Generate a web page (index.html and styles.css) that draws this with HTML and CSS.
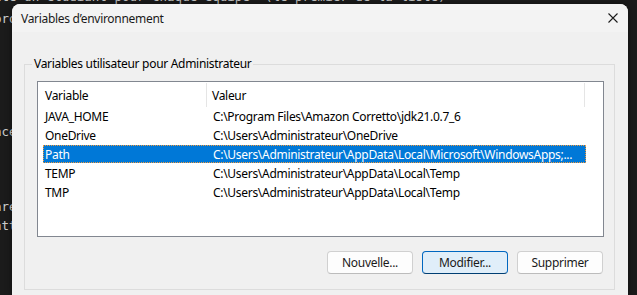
FILE: index.html
```html
<!DOCTYPE html>
<html lang="fr">
<head>
<meta charset="utf-8">
<title>Variables d’environnement</title>
<link rel="stylesheet" href="styles.css">
</head>
<body>
<div class="terminal">
  <div class="tline first">ute un étudiant pour chaque équipe  (le premier de la liste)</div>
  <div class="tline">proj</div>
  <div class="tline"></div>
  <div class="tline"></div>
  <div class="tline"></div>
  <div class="tline"></div>
  <div class="tline"></div>
  <div class="tline">ace</div>
  <div class="tline"></div>
  <div class="tline"></div>
  <div class="tline"></div>
  <div class="tline">are</div>
  <div class="tline">htt:</div>
</div>

<div class="dialog">
  <div class="titlebar">
    <span class="title">Variables d’environnement</span>
    <svg class="close" width="10" height="10" viewBox="0 0 10 10"><path d="M0.5 0.5 L9.5 9.5 M9.5 0.5 L0.5 9.5" stroke="#1b1b1b" stroke-width="1.1" fill="none"/></svg>
  </div>
  <div class="body">
    <div class="group">
      <span class="legend">Variables utilisateur pour Administrateur</span>
      <div class="list">
        <div class="row header">
          <div class="c1">Variable</div>
          <div class="c2">Valeur</div>
        </div>
        <div class="row"><div class="c1">JAVA_HOME</div><div class="c2">C:\Program Files\Amazon Corretto\jdk21.0.7_6</div></div>
        <div class="row"><div class="c1">OneDrive</div><div class="c2">C:\Users\Administrateur\OneDrive</div></div>
        <div class="row selected"><div class="c1">Path</div><div class="c2">C:\Users\Administrateur\AppData\Local\Microsoft\WindowsApps;...</div></div>
        <div class="row"><div class="c1">TEMP</div><div class="c2">C:\Users\Administrateur\AppData\Local\Temp</div></div>
        <div class="row"><div class="c1">TMP</div><div class="c2">C:\Users\Administrateur\AppData\Local\Temp</div></div>
      </div>
      <div class="buttons">
        <button class="btn">Nouvelle...</button>
        <button class="btn default">Modifier...</button>
        <button class="btn">Supprimer</button>
      </div>
    </div>
  </div>
</div>
</body>
</html>
```

FILE: styles.css
```css
html, body {
  margin: 0;
  padding: 0;
}
body {
  width: 637px;
  height: 295px;
  overflow: hidden;
  position: relative;
  background: #1b1b1b;
  font-family: "Segoe UI", "Noto Sans", sans-serif;
  font-size: 12px;
  color: #000;
}
.terminal {
  margin: -12px 0 0 -6px;
  font-family: "DejaVu Sans Mono", monospace;
  font-size: 12.5px;
  line-height: 18.8px;
  color: #cccccc;
}
.tline {
  width: 18px;
  height: 18.8px;
  overflow: hidden;
  white-space: pre;
}
.tline.first {
  width: auto;
  margin-bottom: 3px;
}
.dialog {
  position: absolute;
  left: 12px;
  top: 4px;
  width: 616px;
  height: 291px;
  background: #f0f0f0;
  border-radius: 8px 8px 0 0;
  box-shadow: 0 0 6px rgba(0,0,0,0.5);
  display: flex;
  flex-direction: column;
  letter-spacing: -0.3px;
}
.titlebar {
  height: 28px;
  background: #f3f3f3;
  border-radius: 8px 8px 0 0;
  display: flex;
  align-items: center;
  justify-content: space-between;
  padding: 0 10px 0 9px;
}
.title {
  color: #1a1a1a;
}
.close {
  display: block;
}
.body {
  padding: 32px 13px 0 12px;
}
.group {
  position: relative;
  border: 1px solid #dcdcdc;
  height: 208px;
  padding: 16px 10px 0 12px;
  box-sizing: content-box;
}
.legend {
  position: absolute;
  top: -9px;
  left: 7px;
  padding: 0 2px;
  background: #f0f0f0;
  line-height: 16px;
}
.list {
  height: 154px;
  border: 1px solid #828790;
  background: #fff;
}
.row {
  display: flex;
  margin-left: 5px;
  width: 543px;
  height: 19px;
  align-items: center;
  white-space: nowrap;
}
.row .c1 {
  width: 162px;
  padding-left: 2px;
}
.row .c2 {
  width: 373px;
  padding-left: 6px;
  overflow: hidden;
}
.row.header {
  height: 24px;
  margin-top: 1px;
  align-items: stretch;
}
.row.header .c1,
.row.header .c2 {
  display: flex;
  align-items: center;
  border-right: 1px solid #e5e5e5;
}
.row.header .c1 {
  width: 161px;
}
.row.header .c2 {
  width: 372px;
  padding-left: 5px;
}
.row.selected {
  background: #0078d7;
  color: #fff;
  outline: 1px dotted #f39a3c;
  outline-offset: -1px;
  height: 18px;
  margin-bottom: 1px;
}
.buttons {
  display: flex;
  justify-content: flex-end;
  gap: 9px;
  margin-top: 14px;
  margin-right: 1px;
}
.btn {
  width: 86px;
  height: 23px;
  font: inherit;
  letter-spacing: inherit;
  color: #1a1a1a;
  background: #fdfdfd;
  border: 1px solid #d0d0d0;
  border-bottom-color: #bcbcbc;
  border-radius: 4px;
  padding: 0;
}
.btn.default {
  background: #e0eef9;
  border-color: #0067c0;
  border-bottom-color: #003e73;
}
```
